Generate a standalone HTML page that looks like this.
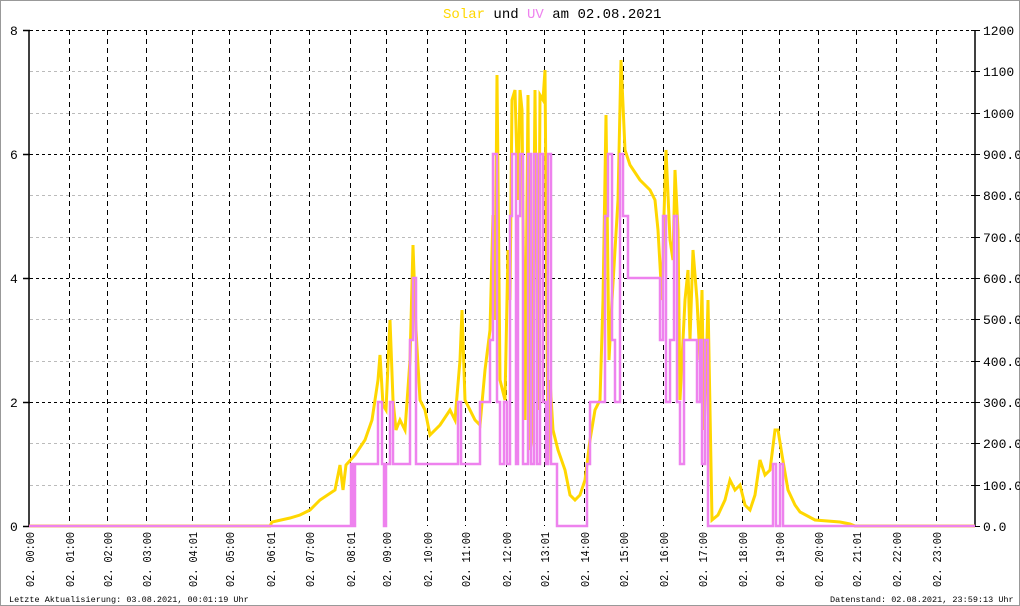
<!DOCTYPE html>
<html><head><meta charset="utf-8"><style>
html,body{margin:0;padding:0;background:#fff}
svg{display:block}
text{font-family:"Liberation Mono","DejaVu Sans Mono",monospace}
</style></head><body>
<svg width="1020" height="606" viewBox="0 0 1020 606" xmlns="http://www.w3.org/2000/svg">
<rect x="0.5" y="0.5" width="1019" height="605" fill="#fff" stroke="#999"/>
<text x="443" y="18" font-size="14"><tspan fill="#ffd700">Solar</tspan><tspan fill="#000"> und </tspan><tspan fill="#ee82ee">UV</tspan><tspan fill="#000"> am 02.08.2021</tspan></text>
<g stroke="#bbb" stroke-dasharray="3,3" stroke-width="1">
<line x1="30" y1="71.5" x2="975" y2="71.5"/><line x1="30" y1="113.5" x2="975" y2="113.5"/>
<line x1="30" y1="195.5" x2="975" y2="195.5"/><line x1="30" y1="237.5" x2="975" y2="237.5"/>
<line x1="30" y1="319.5" x2="975" y2="319.5"/><line x1="30" y1="361.5" x2="975" y2="361.5"/>
<line x1="30" y1="443.5" x2="975" y2="443.5"/><line x1="30" y1="485.5" x2="975" y2="485.5"/>
</g>
<g stroke="#000" stroke-dasharray="3,3" stroke-width="1">
<line x1="30" y1="30.5" x2="975" y2="30.5"/><line x1="30" y1="154.5" x2="975" y2="154.5"/>
<line x1="30" y1="278.5" x2="975" y2="278.5"/><line x1="30" y1="402.5" x2="975" y2="402.5"/>
</g>
<g stroke="#000" stroke-dasharray="5,4" stroke-width="1">
<line x1="69.5" y1="30" x2="69.5" y2="526"/><line x1="107.5" y1="30" x2="107.5" y2="526"/>
<line x1="146.5" y1="30" x2="146.5" y2="526"/><line x1="192.5" y1="30" x2="192.5" y2="526"/>
<line x1="229.5" y1="30" x2="229.5" y2="526"/><line x1="270.5" y1="30" x2="270.5" y2="526"/>
<line x1="309.5" y1="30" x2="309.5" y2="526"/><line x1="350.5" y1="30" x2="350.5" y2="526"/>
<line x1="386.5" y1="30" x2="386.5" y2="526"/><line x1="427.5" y1="30" x2="427.5" y2="526"/>
<line x1="465.5" y1="30" x2="465.5" y2="526"/><line x1="506.5" y1="30" x2="506.5" y2="526"/>
<line x1="544.5" y1="30" x2="544.5" y2="526"/><line x1="584.5" y1="30" x2="584.5" y2="526"/>
<line x1="623.5" y1="30" x2="623.5" y2="526"/><line x1="663.5" y1="30" x2="663.5" y2="526"/>
<line x1="702.5" y1="30" x2="702.5" y2="526"/><line x1="742.5" y1="30" x2="742.5" y2="526"/>
<line x1="779.5" y1="30" x2="779.5" y2="526"/><line x1="818.5" y1="30" x2="818.5" y2="526"/>
<line x1="856.5" y1="30" x2="856.5" y2="526"/><line x1="896.5" y1="30" x2="896.5" y2="526"/>
<line x1="936.5" y1="30" x2="936.5" y2="526"/>
</g>
<g stroke="#000" stroke-width="1.5">
<line x1="29" y1="30" x2="29" y2="527"/><line x1="975" y1="30" x2="975" y2="527"/>
<line x1="23" y1="30.5" x2="30" y2="30.5"/><line x1="23" y1="154.5" x2="30" y2="154.5"/><line x1="23" y1="278.5" x2="30" y2="278.5"/><line x1="23" y1="402.5" x2="30" y2="402.5"/><line x1="23" y1="526.5" x2="30" y2="526.5"/>
</g>
<g stroke="#000" stroke-width="1">
<line x1="971" y1="30.5" x2="980" y2="30.5"/><line x1="971" y1="71.5" x2="980" y2="71.5"/><line x1="971" y1="113.5" x2="980" y2="113.5"/><line x1="971" y1="154.5" x2="980" y2="154.5"/><line x1="971" y1="195.5" x2="980" y2="195.5"/><line x1="971" y1="237.5" x2="980" y2="237.5"/><line x1="971" y1="278.5" x2="980" y2="278.5"/><line x1="971" y1="319.5" x2="980" y2="319.5"/><line x1="971" y1="361.5" x2="980" y2="361.5"/><line x1="971" y1="402.5" x2="980" y2="402.5"/><line x1="971" y1="443.5" x2="980" y2="443.5"/><line x1="971" y1="485.5" x2="980" y2="485.5"/><line x1="971" y1="526.5" x2="980" y2="526.5"/>
</g>
<g font-size="13" fill="#000">
<text x="10" y="35">8</text><text x="10" y="159">6</text><text x="10" y="283">4</text><text x="10" y="407">2</text><text x="10" y="531">0</text>
<text x="983" y="35">1200</text><text x="983" y="76">1100</text><text x="983" y="118">1000</text><text x="983" y="159">900.0</text><text x="983" y="200">800.0</text><text x="983" y="242">700.0</text><text x="983" y="283">600.0</text><text x="983" y="324">500.0</text><text x="983" y="366">400.0</text><text x="983" y="407">300.0</text><text x="983" y="448">200.0</text><text x="983" y="490">100.0</text><text x="983" y="531">0.0</text>
</g>
<polyline fill="none" stroke="#ffd700" stroke-width="3" points="29,526 270,526 272,522 290,518 300,515 310,510 320,500 335,490 340,465 343,490 346,465 355,455 365,440 372,420 378,380 380,355 383,405 386,410 390,320 393,400 396,430 400,420 405,430 410,360 413,245 416,330 420,400 425,410 430,435 440,425 450,410 455,420 460,360 462,310 465,400 475,420 480,425 485,370 490,330 493,215 495,320 497,75 500,380 505,400 508,250 510,300 512,100 515,90 518,200 520,90 522,110 525,420 528,95 530,450 532,440 535,90 538,410 540,95 543,100 545,70 548,460 550,380 553,430 558,450 565,470 570,495 575,500 580,495 585,480 590,440 595,410 600,400 603,300 606,115 609,360 612,300 615,250 618,200 621,60 625,150 630,165 640,180 650,190 655,200 658,230 662,300 664,215 666,150 670,240 673,260 675,170 678,230 680,400 685,300 688,270 690,340 693,250 697,300 700,360 702,290 704,430 706,380 708,300 712,520 718,515 725,500 730,480 735,490 740,485 745,505 750,510 755,495 760,460 765,475 770,470 775,430 778,430 782,455 788,490 795,505 800,512 815,520 840,522 850,524 855,526 975,526"/>
<polyline fill="none" stroke="#ee82ee" stroke-width="2.5" points="29,526 351,526 351,464 353,464 353,526 355,526 355,464 378,464 378,402 382,402 382,464 384,464 384,526 386,526 386,464 390,464 390,402 393,402 393,464 410,464 410,340 413,340 413,278 416,278 416,464 458,464 458,402 461,402 461,464 480,464 480,402 490,402 490,340 493,340 493,154 497,154 497,402 500,402 500,464 504,464 504,402 507,402 507,464 510,464 510,216 512,216 512,154 516,154 516,464 518,464 518,216 520,216 520,154 523,154 523,464 528,464 528,154 531,154 531,464 534,464 534,154 537,154 537,464 540,464 540,154 543,154 543,402 546,402 546,464 548,464 548,154 551,154 551,464 557,464 557,526 587,526 587,464 590,464 590,402 605,402 605,216 608,216 608,154 612,154 612,340 615,340 615,402 620,402 620,154 623,154 623,216 628,216 628,278 660,278 660,340 663,340 663,216 666,216 666,402 670,402 670,340 674,340 674,216 677,216 677,402 680,402 680,464 684,464 684,340 697,340 697,402 700,402 700,340 702,340 702,464 705,464 705,340 708,340 708,526 773,526 773,464 776,464 776,526 780,526 780,464 783,464 783,526 975,526"/>
<g font-size="12" fill="#000">
<text transform="translate(34,587) rotate(-90)" textLength="55" lengthAdjust="spacingAndGlyphs">02. 00:00</text>
<text transform="translate(74,587) rotate(-90)" textLength="55" lengthAdjust="spacingAndGlyphs">02. 01:00</text>
<text transform="translate(112,587) rotate(-90)" textLength="55" lengthAdjust="spacingAndGlyphs">02. 02:00</text>
<text transform="translate(151,587) rotate(-90)" textLength="55" lengthAdjust="spacingAndGlyphs">02. 03:00</text>
<text transform="translate(197,587) rotate(-90)" textLength="55" lengthAdjust="spacingAndGlyphs">02. 04:01</text>
<text transform="translate(234,587) rotate(-90)" textLength="55" lengthAdjust="spacingAndGlyphs">02. 05:00</text>
<text transform="translate(275,587) rotate(-90)" textLength="55" lengthAdjust="spacingAndGlyphs">02. 06:01</text>
<text transform="translate(314,587) rotate(-90)" textLength="55" lengthAdjust="spacingAndGlyphs">02. 07:00</text>
<text transform="translate(355,587) rotate(-90)" textLength="55" lengthAdjust="spacingAndGlyphs">02. 08:01</text>
<text transform="translate(391,587) rotate(-90)" textLength="55" lengthAdjust="spacingAndGlyphs">02. 09:00</text>
<text transform="translate(432,587) rotate(-90)" textLength="55" lengthAdjust="spacingAndGlyphs">02. 10:00</text>
<text transform="translate(470,587) rotate(-90)" textLength="55" lengthAdjust="spacingAndGlyphs">02. 11:00</text>
<text transform="translate(511,587) rotate(-90)" textLength="55" lengthAdjust="spacingAndGlyphs">02. 12:00</text>
<text transform="translate(549,587) rotate(-90)" textLength="55" lengthAdjust="spacingAndGlyphs">02. 13:01</text>
<text transform="translate(589,587) rotate(-90)" textLength="55" lengthAdjust="spacingAndGlyphs">02. 14:00</text>
<text transform="translate(628,587) rotate(-90)" textLength="55" lengthAdjust="spacingAndGlyphs">02. 15:00</text>
<text transform="translate(668,587) rotate(-90)" textLength="55" lengthAdjust="spacingAndGlyphs">02. 16:00</text>
<text transform="translate(707,587) rotate(-90)" textLength="55" lengthAdjust="spacingAndGlyphs">02. 17:00</text>
<text transform="translate(747,587) rotate(-90)" textLength="55" lengthAdjust="spacingAndGlyphs">02. 18:00</text>
<text transform="translate(784,587) rotate(-90)" textLength="55" lengthAdjust="spacingAndGlyphs">02. 19:00</text>
<text transform="translate(823,587) rotate(-90)" textLength="55" lengthAdjust="spacingAndGlyphs">02. 20:00</text>
<text transform="translate(861,587) rotate(-90)" textLength="55" lengthAdjust="spacingAndGlyphs">02. 21:01</text>
<text transform="translate(901,587) rotate(-90)" textLength="55" lengthAdjust="spacingAndGlyphs">02. 22:00</text>
<text transform="translate(941,587) rotate(-90)" textLength="55" lengthAdjust="spacingAndGlyphs">02. 23:00</text>
</g>
<text x="9" y="602" font-size="8.5" fill="#000">Letzte Aktualisierung: 03.08.2021, 00:01:19 Uhr</text>
<text x="830" y="602" font-size="8.5" fill="#000">Datenstand: 02.08.2021, 23:59:13 Uhr</text>
</svg>
</body></html>
